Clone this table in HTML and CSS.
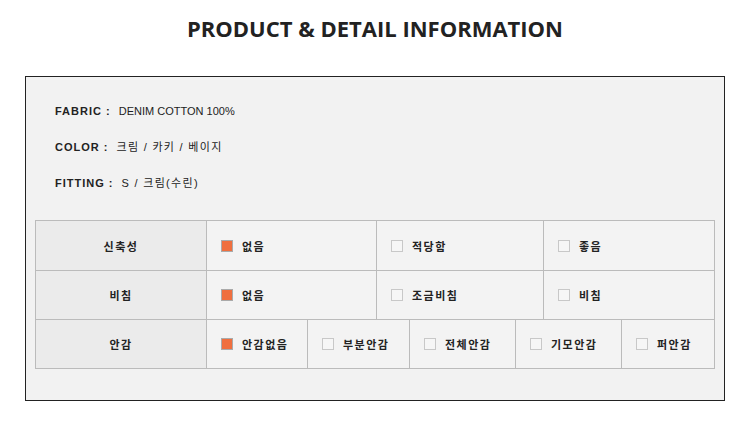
FILE: index.html
```html
<!DOCTYPE html>
<html lang="ko">
<head>
    <meta charset="UTF-8">
    <meta name="viewport" content="width=device-width, initial-scale=1.0">
    <title>Product &amp; Detail Information</title>
    <link rel="stylesheet" href="styles.css">
</head>
<body>
    <h1 class="title">PRODUCT &amp; DETAIL INFORMATION</h1>

    <div class="detail-box">
      <ul class="info">
        <li><b>FABRIC :</b> <span>DENIM COTTON 100%</span></li>
        <li><b>COLOR :</b> <span class="ko">크림 / 카키 / 베이지</span></li>
        <li><b>FITTING :</b> <span class="ko">S / 크림(수린)</span></li>
      </ul>

      <div class="spec">
        <div class="spec-row cols-3">
          <div class="label">신축성</div>
          <div class="opt"><i class="check on"></i>없음</div>
          <div class="opt"><i class="check"></i>적당함</div>
          <div class="opt"><i class="check"></i>좋음</div>
        </div>
        <div class="spec-row cols-3">
          <div class="label">비침</div>
          <div class="opt"><i class="check on"></i>없음</div>
          <div class="opt"><i class="check"></i>조금비침</div>
          <div class="opt"><i class="check"></i>비침</div>
        </div>
        <div class="spec-row cols-5">
          <div class="label">안감</div>
          <div class="opt"><i class="check on"></i>안감없음</div>
          <div class="opt"><i class="check"></i>부분안감</div>
          <div class="opt"><i class="check"></i>전체안감</div>
          <div class="opt"><i class="check"></i>기모안감</div>
          <div class="opt"><i class="check"></i>퍼안감</div>
        </div>
      </div>
    </div>
</body>
</html>
```

FILE: styles.css
```css
body {
  margin: 0;
  padding: 0;
  background-color: #fff;
  color: #222;
  font-family: "Liberation Sans", "Noto Sans CJK KR", sans-serif;
}
.title {
  margin: 0;
  padding-top: 14px;
  line-height: 28px;
  text-align: center;
  font-family: "Open Sans", sans-serif;
  font-size: 22px;
  font-weight: 700;
  color: #222;
}
.detail-box {
  box-sizing: border-box;
  width: 700px;
  height: 325px;
  margin: 34px 0 0 25px;
  border: 1px solid #222;
  background-color: #f2f2f2;
}
.info {
  list-style: none;
  margin: 0;
  padding: 16px 0 0 29px;
  font-size: 11px;
  line-height: 36px;
}
.info b {
  letter-spacing: 1px;
  margin-right: 5px;
}
.info .ko {
  letter-spacing: 1.3px;
}
.spec {
  box-sizing: border-box;
  width: 680px;
  margin: 19px 0 0 9px;
  border-top: 1px solid #bbb;
  border-left: 1px solid #bbb;
  font-family: "Noto Sans CJK KR", sans-serif;
  font-size: 11px;
  font-weight: 700;
  letter-spacing: 1.5px;
}
.spec-row {
  display: grid;
  height: 49px;
}
.spec-row:first-child {
  height: 50px;
}
.cols-3 {
  grid-template-columns: 171px 170px 167px 1fr;
}
.cols-5 {
  grid-template-columns: 171px 101px 102px 106px 106px 1fr;
}
.spec-row > div {
  display: flex;
  align-items: center;
  border-right: 1px solid #bbb;
  border-bottom: 1px solid #bbb;
  background-color: #f3f3f3;
}
.spec-row .label {
  justify-content: center;
  background-color: #ebebeb;
}
.opt {
  padding-left: 14px;
}
.check {
  box-sizing: border-box;
  width: 12px;
  height: 12px;
  margin-right: 9px;
  border: 1px solid #c8c8c8;
  background-color: #f6f6f6;
}
.check.on {
  border-color: #aaa;
  background-color: #ef6f3f;
}
```
